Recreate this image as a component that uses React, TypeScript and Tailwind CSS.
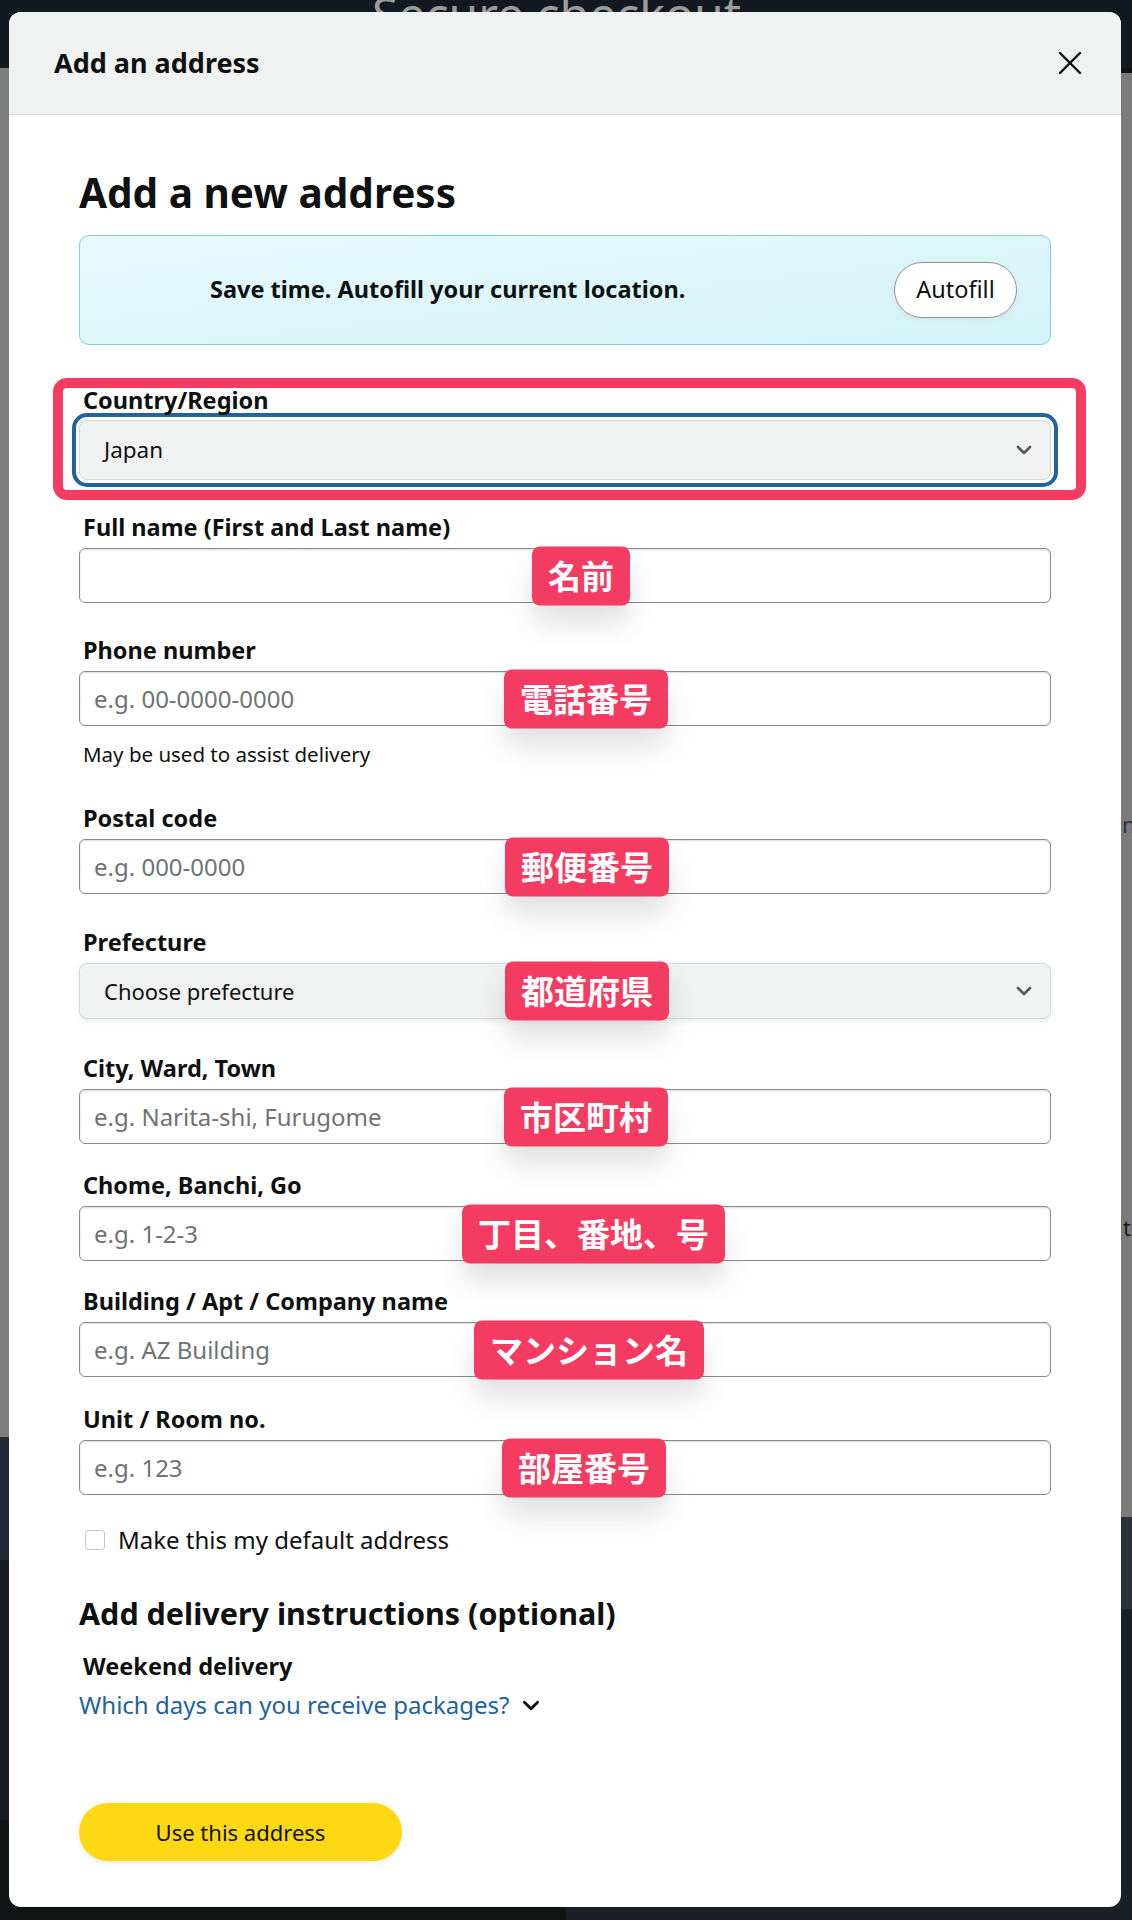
import { ChevronDown } from "lucide-react";

type FieldDef = {
  label: string;
  placeholder?: string;
  tag: string;
  tagLeft: number;
  gap: string;
  select?: boolean;
};

const fields: FieldDef[] = [
  { label: "Full name (First and Last name)", tag: "名前", tagLeft: 453, gap: "mt-[33px]" },
  { label: "Phone number", placeholder: "e.g. 00-0000-0000", tag: "電話番号", tagLeft: 425, gap: "mt-[33px]" },
  { label: "Postal code", placeholder: "e.g. 000-0000", tag: "郵便番号", tagLeft: 426, gap: "mt-[38px]" },
  { label: "Prefecture", placeholder: "Choose prefecture", tag: "都道府県", tagLeft: 426, gap: "mt-[34px]", select: true },
  { label: "City, Ward, Town", placeholder: "e.g. Narita-shi, Furugome", tag: "市区町村", tagLeft: 425, gap: "mt-[35px]" },
  { label: "Chome, Banchi, Go", placeholder: "e.g. 1-2-3", tag: "丁目、番地、号", tagLeft: 383, gap: "mt-[27px]" },
  { label: "Building / Apt / Company name", placeholder: "e.g. AZ Building", tag: "マンション名", tagLeft: 395, gap: "mt-[26px]" },
  { label: "Unit / Room no.", placeholder: "e.g. 123", tag: "部屋番号", tagLeft: 423, gap: "mt-[28px]" },
];

// pink annotation label sitting over an input
function Tag({ text, left }: { text: string; left: number }) {
  return (
    <span
      className="pointer-events-none absolute top-1/2 -translate-y-1/2 h-[59px] px-[16px] flex items-center rounded-[8px] bg-[#f43b61] text-white text-[33px] leading-none font-bold shadow-[0_18px_28px_rgba(0,0,0,0.12)] whitespace-nowrap"
      style={{ left }}
    >
      {text}
    </span>
  );
}

function Chevron({ className }: { className: string }) {
  return (
    <svg viewBox="0 0 16 10" className={className} fill="none" stroke="currentColor" strokeWidth={2.6} strokeLinecap="round" strokeLinejoin="round">
      <polyline points="2,2 8,8 14,2" />
    </svg>
  );
}

function SelectBox({ value, tall }: { value: string; tall?: boolean }) {
  return (
    <div
      className={
        tall
          ? "w-full h-[60px] flex items-center justify-between pl-[24px] pr-[18px] rounded-[8px] bg-[#f0f2f2] border border-[#d5d9d9] text-[22.5px] text-[#0f1111] shadow-[0_0_0_3px_#ffffff,0_0_0_7px_#2162a1]"
          : "w-full h-[56px] flex items-center justify-between pl-[24px] pr-[18px] rounded-[8px] bg-[#f0f2f2] border border-[#d5d9d9] text-[22px] text-[#0f1111] shadow-[0_2px_5px_rgba(213,217,217,0.5)]"
      }
    >
      <span>{value}</span>
      <Chevron className="w-[16px] h-[10px] text-[#565959]" />
    </div>
  );
}

function Field({ f }: { f: FieldDef }) {
  return (
    <div className={f.gap}>
      <div className="pl-[4px] mb-[7px] text-[23.5px] leading-[28px] font-bold text-[#0f1111]">{f.label}</div>
      <div className="relative">
        {f.select ? (
          <SelectBox value={f.placeholder ?? ""} />
        ) : (
          <input
            placeholder={f.placeholder}
            className="w-full h-[55px] rounded-[6px] border border-[#888c8c] bg-white px-[14px] text-[24px] text-[#0f1111] placeholder:text-[#6f7373] shadow-[inset_0_1px_2px_rgba(15,17,17,0.15)] outline-none"
          />
        )}
        <Tag text={f.tag} left={f.tagLeft} />
      </div>
    </div>
  );
}

function Backdrop() {
  return (
    <div className="absolute inset-0 flex flex-col">
      <div className="h-[68px] bg-[#131921] flex justify-start pl-[372px] overflow-hidden">
        <span className="-mt-[10px] text-[48px] leading-[48px] text-[#9a9c9e] whitespace-nowrap">Secure checkout ⌄</span>
      </div>
      <div className="flex-1 flex">
        <div className="w-1/2 flex flex-col">
          <div className="h-[1369px] bg-[#7d7d7d] flex flex-col items-end text-[22px] text-[#1a1a1a] overflow-hidden">
            <span className="mt-[286px] mr-[-2px]">y</span>
            <span className="mt-[826px] leading-[28px] mr-[-1px]">o</span>
            <span className="leading-[28px]">t</span>
            <span className="mt-[14px] leading-[28px] text-[#1b4c7c] underline">c</span>
            <span className="mt-[10px] leading-[28px]">a</span>
          </div>
          <div className="h-[123px] bg-[#222a33]" />
          <div className="h-[260px] bg-[#191d23] flex flex-col items-end overflow-hidden">
            <span className="mt-[36px] text-[22px] text-[#8a8d90]">a</span>
          </div>
          <div className="flex-1 bg-[#111315]" />
        </div>
        <div className="w-1/2 flex flex-col">
          <div className="h-[1444px] mt-[5px] bg-[#7b7b7b] flex flex-col items-start text-[22px] text-[#24364a] overflow-hidden">
            <span className="mt-[735px] ml-[556px]">na</span>
            <span className="mt-[370px] ml-[557px] text-[#1a1a1a]">to</span>
          </div>
          <div className="h-[92px] bg-[#29313b]" />
          <div className="flex-1 bg-[#1b2027]" />
        </div>
      </div>
    </div>
  );
}

export default function App() {
  return (
    <div className="relative w-[1132px] h-[1920px] overflow-hidden bg-[#111315] font-['Noto_Sans','Noto_Sans_CJK_JP',sans-serif]">
      <Backdrop />

      <div className="absolute left-[9px] top-[12px] w-[1112px] h-[1895px] rounded-[12px] bg-white overflow-hidden flex flex-col">
        <div className="h-[103px] shrink-0 bg-[#f0f2f2] border-b border-[#d5d9d9] flex items-center justify-between pl-[45px] pr-[39px]">
          <h1 className="text-[27px] font-bold text-[#0f1111]">Add an address</h1>
          <svg viewBox="0 0 24 24" className="w-[24px] h-[24px] text-[#0f1111]" fill="none" stroke="currentColor" strokeWidth={2.4} strokeLinecap="round">
            <line x1="2" y1="2" x2="22" y2="22" />
            <line x1="22" y1="2" x2="2" y2="22" />
          </svg>
        </div>

        <div className="px-[70px] pt-[54px] text-[#0f1111]">
          <h2 className="text-[40.5px] leading-[47px] font-bold">Add a new address</h2>

          <div className="mt-[19px] h-[110px] rounded-[10px] border border-[#7fcfda] bg-gradient-to-br from-[#e8f9fc] to-[#d2f3f9] flex items-center justify-between pl-[130px] pr-[33px]">
            <span className="text-[23.5px] font-bold">Save time. Autofill your current location.</span>
            <button className="w-[123px] h-[56px] rounded-full border border-[#8d9096] bg-white text-[23.5px] shadow-[0_2px_5px_rgba(213,217,217,0.5)]">
              Autofill
            </button>
          </div>

          <div className="relative mt-[41px]">
            <div className="pl-[4px] mb-[6px] text-[23.5px] leading-[28px] font-bold">Country/Region</div>
            <SelectBox value="Japan" tall />
            <div className="pointer-events-none absolute -left-[26px] -right-[35px] -top-[8px] -bottom-[20px] rounded-[14px] border-[10px] border-[#f43b61]" />
          </div>

          {fields.slice(0, 2).map((f) => (
            <Field key={f.label} f={f} />
          ))}
          <p className="mt-[16px] pl-[4px] text-[20.5px] leading-[24px]">May be used to assist delivery</p>
          {fields.slice(2).map((f) => (
            <Field key={f.label} f={f} />
          ))}

          <label className="mt-[31px] flex items-center gap-[13px] pl-[6px] text-[24px] leading-[28px]">
            <span className="w-[20px] h-[20px] rounded-[3px] border border-[#c4c7c7] bg-white" />
            Make this my default address
          </label>

          <h3 className="mt-[41px] text-[30.5px] leading-[36px] font-bold">Add delivery instructions (optional)</h3>
          <div className="mt-[21px] pl-[4px] text-[23.5px] leading-[28px] font-bold">Weekend delivery</div>
          <div className="mt-[10px] flex items-center gap-[13px] text-[24px] leading-[30px]">
            <span className="text-[#2162a1]">Which days can you receive packages?</span>
            <Chevron className="w-[18px] h-[11px] text-[#0f1111]" />
          </div>

          <button className="mt-[83px] w-[323px] h-[58px] rounded-full bg-[#ffd814] text-[22px] text-[#0f1111] shadow-[0_2px_5px_rgba(213,217,217,0.5)]">
            Use this address
          </button>
        </div>
      </div>
    </div>
  );
}
